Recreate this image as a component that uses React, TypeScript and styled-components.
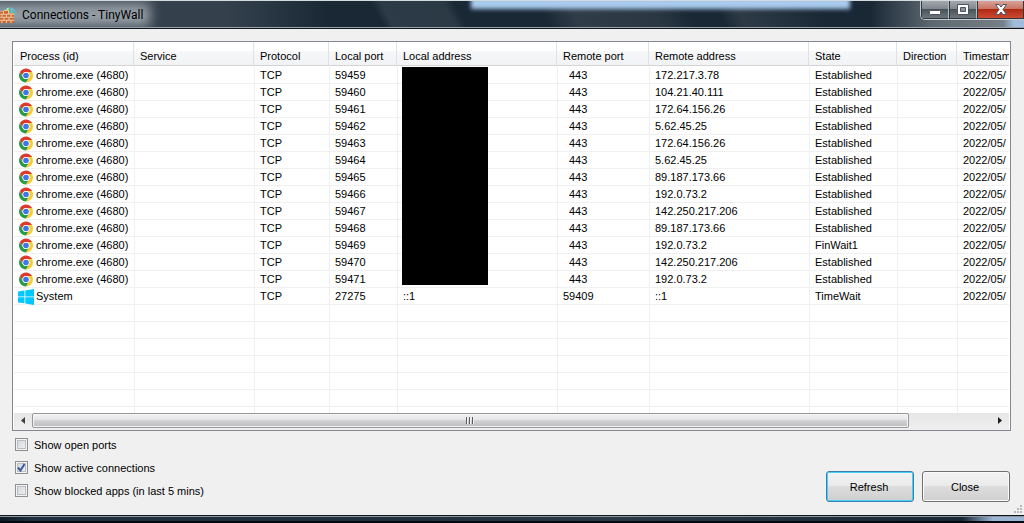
import React from "react";
import styled, { createGlobalStyle } from "styled-components";

const GlobalStyle = createGlobalStyle`
  *, *::before, *::after { box-sizing: border-box; }
  html, body { margin: 0; padding: 0; }
  body, button, input {
    font-family: "Liberation Sans", Arial, sans-serif;
    font-size: 11px;
    line-height: 16px;
    color: #000;
  }
`;

const Window = styled.div`
  display: flex;
  flex-direction: column;
  height: 100vh;
  min-height: 300px;
  overflow: hidden;
  background: #f0f0f0;
`;

const TitleBar = styled.header`
  position: relative;
  flex: none;
  display: flex;
  align-items: center;
  justify-content: space-between;
  height: 29px;
  overflow: hidden;
  border-top: 1px solid #d3dbde;
  border-bottom: 1px solid #10141c;
  box-shadow: inset 0 -1px 0 #9aa3ac;
  background:
    linear-gradient(90deg, transparent 98%, #9fbcdb 99%) 0 17px / 100% 10px no-repeat,
    linear-gradient(90deg, transparent 85%, #5c6870 91%, #737b82 97%, #7e8c99 100%),
    linear-gradient(62deg, transparent 37%, #2d3a47 38%, #2b3945 44%, transparent 45%),
    linear-gradient(62deg, transparent 53%, #303c48 56%, #2a3743 64%, transparent 67%),
    linear-gradient(62deg, transparent 70%, #2d3a46 72%, transparent 80%),
    linear-gradient(90deg, #34414d 22%, transparent 32%),
    #1a2836;
`;

const BackdropGlow = styled.span`
  position: absolute;
  top: -4px;
  left: 46%;
  width: 37%;
  height: 12px;
  background: #a9cbee;
  filter: blur(2px);
`;

const TitleGlow = styled.span`
  position: absolute;
  top: 0;
  bottom: 1px;
  left: -20px;
  width: 170px;
  background: linear-gradient(#757e87, #a0a8af 55%, #858d95);
  filter: blur(6px);
`;

const TitleText = styled.h1`
  position: relative;
  display: flex;
  align-items: center;
  gap: 6px;
  margin: 0;
  font-family: Roboto, "Open Sans", sans-serif;
  font-weight: 400;
  font-size: 12px;
  line-height: 16px;
`;

const CaptionButtons = styled.div`
  position: relative;
  align-self: flex-start;
  display: flex;
  height: 19px;
  border: 1px solid #c4c9cd;
  border-top: 0;
  border-right: 0;
  border-radius: 0 0 0 5px;
  overflow: hidden;
`;

const CaptionButton = styled.button<{ $close?: boolean }>`
  display: flex;
  align-items: center;
  justify-content: center;
  width: ${(p) => (p.$close ? 47 : 28)}px;
  padding: 0;
  border: 1px solid #30373e;
  border-top: 0;
  border-right-color: ${(p) => (p.$close ? "#30373e" : "#b4babf")};
  background: ${(p) =>
    p.$close
      ? "linear-gradient(#d9a298, #c77262 48%, #b02a14 50%, #cc4a30)"
      : "linear-gradient(#a3a8ad, #7f868d 48%, #4a535b 50%, #6d757c)"};
`;

const Client = styled.main`
  flex: 1;
  min-height: 0;
  display: flex;
  flex-direction: column;
  padding: 12px 13px 13px 12px;
`;

const ListView = styled.section`
  flex: 1;
  min-height: 0;
  display: flex;
  flex-direction: column;
  padding: 0 1px;
  border: 1px solid #828790;
  background: #fff;
`;

const Viewport = styled.div`
  flex: 1;
  min-height: 0;
  overflow: hidden;
`;

const Table = styled.table`
  table-layout: fixed;
  width: 1063px;
  border-collapse: separate;
  border-spacing: 0;
`;

const HeadCell = styled.th`
  height: 25px;
  padding: 2px 0 0 6px;
  text-align: left;
  font-weight: 400;
  white-space: nowrap;
  background:
    linear-gradient(#d5d5d5, #d5d5d5) 0 23px / 100% 1px no-repeat,
    linear-gradient(#dfe1e4, #dfe1e4) 100% 0 / 1px 23px no-repeat,
    linear-gradient(#fff 40%, #f7f8fa 41%, #f1f2f4) 0 0 / 100% 23px no-repeat;
`;

const Cell = styled.td<{ $indent?: boolean }>`
  position: relative;
  height: 17px;
  padding: 1px 0 0 ${(p) => (p.$indent ? 12 : 6)}px;
  line-height: 15px;
  white-space: nowrap;
  border-bottom: 1px solid #f0f0f0;
  box-shadow: inset 1px 0 0 #f0f0f0;

  &:first-child {
    padding-left: 4px;
    box-shadow: none;
  }
`;

const Process = styled.span`
  display: flex;
  align-items: center;
  height: 15px;
  gap: 2px;

  svg { flex: none; }
`;

const Redaction = styled.span`
  position: absolute;
  z-index: 1;
  top: 0;
  left: 5px;
  width: 86px;
  height: 218px;
  background: #000;
`;

const ScrollBar = styled.div`
  flex: none;
  display: flex;
  height: 17px;
  background: linear-gradient(#e6e6e6, #efefef);
`;

const ScrollArrow = styled.button`
  display: flex;
  align-items: center;
  justify-content: center;
  width: 18px;
  padding: 0 0 2px;
  border: 0;
  background: transparent;
`;

const ScrollTrack = styled.div`
  flex: 1;
`;

const ScrollThumb = styled.div`
  display: flex;
  align-items: center;
  justify-content: center;
  gap: 1px;
  height: 15px;
  border: 1px solid #979797;
  border-radius: 2px;
  box-shadow: inset 0 0 0 1px #f6f6f6;
  background: linear-gradient(#f3f3f3, #e4e4e6 48%, #d2d2d4 50%, #bdbdc0);
`;

const Grip = styled.i`
  width: 2px;
  height: 7px;
  border-right: 1px solid #f4f4f4;
  background: #55585c;
`;

const Footer = styled.footer`
  flex: none;
  display: flex;
  align-items: flex-end;
  justify-content: space-between;
  padding: 2px 1px 0 3px;
`;

const Options = styled.div`
  display: flex;
  flex-direction: column;
`;

const Option = styled.label`
  display: flex;
  align-items: center;
  gap: 6px;
  height: 23px;
`;

const OptionText = styled.span`
  padding-top: 1px;
`;

const BoxStack = styled.span`
  display: grid;

  > * { grid-area: 1 / 1; }
  svg { pointer-events: none; visibility: hidden; }
  input:checked + svg { visibility: visible; }
`;

const CheckBox = styled.input`
  appearance: none;
  width: 13px;
  height: 13px;
  margin: 0;
  border: 1px solid #8e8f8f;
  box-shadow: inset 0 0 0 1px #f4f4f4, inset 0 0 0 2px #b9bec4;
  background: linear-gradient(135deg, #cfd3d8, #f5f5f6);
`;

const Actions = styled.div`
  display: flex;
  gap: 8px;
`;

const PushButton = styled.button<{ $primary?: boolean }>`
  width: 88px;
  height: 31px;
  padding: 1px 2px 0 0;
  border: 1px solid ${(p) => (p.$primary ? "#3c7fb1" : "#707070")};
  border-radius: 3px;
  box-shadow: ${(p) => (p.$primary ? "inset 0 0 0 1px #46d0f7" : "inset 0 0 0 1px #fafafa")};
  background: linear-gradient(#f2f2f2, #ebebeb 49%, #dddddd 50%, #cfcfcf);
`;

const SizeGrip = styled.svg`
  position: absolute;
  right: 2px;
  bottom: 10px;
`;

const BottomFrame = styled.div`
  flex: none;
  height: 8px;
  border-top: 1px solid #10141c;
  border-bottom: 2px solid #05080c;
  box-shadow: inset 0 1px 0 #8d979f;
  background: linear-gradient(90deg, #101a24, #1f2f3f 3%, #22303e 40%, #2c3a48 60%, #1a2836 94%, #9ab6d4 97%);
`;

const ChromeIcon = () => (
  <svg width="16" height="16" viewBox="0 0 32 32" aria-hidden="true">
    <circle cx="16" cy="15" r="14" fill="#fff" />
    <path d="M3.9 8A14 14 0 0 1 28.1 8L16 8A7 7 0 0 0 9.9 18.5Z" fill="#db3b2f" />
    <path d="M28.1 8A14 14 0 0 1 16 29L22.1 18.5A7 7 0 0 0 16 8Z" fill="#fccb2e" />
    <path d="M16 29A14 14 0 0 1 3.9 8L9.9 18.5A7 7 0 0 0 22.1 18.5Z" fill="#2a9a48" />
    <circle cx="16" cy="15" r="7" fill="#fff" />
    <circle cx="16" cy="15" r="5.6" fill="#3b78e7" />
  </svg>
);

const WindowsIcon = () => (
  <svg width="16" height="16" viewBox="0 0 16 16" aria-hidden="true">
    <path d="M0 2.4L6.5 1.5V7.5H0ZM7.3 1.4L16 0V7.5H7.3ZM0 8.3H6.5V14.3L0 13.4ZM7.3 8.3H16V16L7.3 14.6Z" fill="#00c8ff" />
  </svg>
);

const FirewallIcon = () => (
  <svg width="16" height="16" viewBox="0 0 16 16" aria-hidden="true">
    <circle cx="10" cy="6" r="5.8" fill="#6fb4dd" />
    <path d="M5 4Q8 0 11 .6L9 3L11 4L8 6H5ZM13 3L15 6L13 9Z" fill="#58b947" />
    <path d="M6 2Q8 1 9 1L8 3Z" fill="#dff3d0" />
    <path d="M0 4H4V3H9V6H14V16H0Z" fill="#f0c9a0" />
    <path d="M0 4.6H3V6.8H0ZM4 4H8V6.8H4ZM9 6.6H13.5V7H9ZM0 7.8H1.5V9.8H0ZM2.5 7.8H6V9.8H2.5ZM7 7.8H10.5V9.8H7ZM11.5 7.8H14V9.8H11.5ZM0 10.8H3.5V12.8H0ZM4.5 10.8H8.5V12.8H4.5ZM9.5 10.8H14V12.8H9.5ZM0 13.8H1.5V16H0ZM2.5 13.8H6V16H2.5ZM7 13.8H10.5V16H7ZM11.5 13.8H14V16H11.5Z" fill="#c96a35" />
  </svg>
);

type Connection = {
  process: string;
  system?: boolean;
  localPort: string;
  localAddress?: string;
  remotePort: string;
  remoteAddress: string;
  state: string;
};

const chromeRows: [string, string, string][] = [
  ["59459", "172.217.3.78", "Established"],
  ["59460", "104.21.40.111", "Established"],
  ["59461", "172.64.156.26", "Established"],
  ["59462", "5.62.45.25", "Established"],
  ["59463", "172.64.156.26", "Established"],
  ["59464", "5.62.45.25", "Established"],
  ["59465", "89.187.173.66", "Established"],
  ["59466", "192.0.73.2", "Established"],
  ["59467", "142.250.217.206", "Established"],
  ["59468", "89.187.173.66", "Established"],
  ["59469", "192.0.73.2", "FinWait1"],
  ["59470", "142.250.217.206", "Established"],
  ["59471", "192.0.73.2", "Established"],
];

const connections: Connection[] = [
  ...chromeRows.map(([localPort, remoteAddress, state]) => ({
    process: "chrome.exe (4680)",
    localPort,
    remotePort: "443",
    remoteAddress,
    state,
  })),
  {
    process: "System",
    system: true,
    localPort: "27275",
    localAddress: "::1",
    remotePort: "59409",
    remoteAddress: "::1",
    state: "TimeWait",
  },
];

const columns: [string, number][] = [
  ["Process (id)", 120],
  ["Service", 120],
  ["Protocol", 75],
  ["Local port", 68],
  ["Local address", 160],
  ["Remote port", 92],
  ["Remote address", 160],
  ["State", 88],
  ["Direction", 60],
  ["Timestamp", 120],
];

const BLANK_ROWS = 40;

const options = [
  { label: "Show open ports", checked: false },
  { label: "Show active connections", checked: true },
  { label: "Show blocked apps (in last 5 mins)", checked: false },
];

export default function App() {
  return (
    <>
      <GlobalStyle />
      <Window>
        <TitleBar>
          <BackdropGlow />
          <TitleGlow />
          <TitleText>
            <FirewallIcon />
            Connections - TinyWall
          </TitleText>
          <CaptionButtons>
            <CaptionButton aria-label="Minimize">
              <svg width="12" height="12" viewBox="0 0 12 12">
                <rect x="0.5" y="6.5" width="11" height="4" rx="1" fill="#fff" stroke="#4b5460" />
              </svg>
            </CaptionButton>
            <CaptionButton aria-label="Maximize">
              <svg width="12" height="11" viewBox="0 0 12 11">
                <path d="M.5 .5H11.5V10.5H.5ZM3.5 3.5V7.5H8.5V3.5Z" fill="#fff" fillRule="evenodd" stroke="#4b5460" />
                <rect x="4" y="4" width="4" height="3" fill="#8d949b" />
              </svg>
            </CaptionButton>
            <CaptionButton $close aria-label="Close window">
              <svg width="12" height="11" viewBox="0 0 12 11">
                <path d="M.5 .5H4L6 3L8 .5H11.5L8 5.5L11.5 10.5H8L6 8L4 10.5H.5L4 5.5Z" fill="#fff" stroke="#4b5460" />
              </svg>
            </CaptionButton>
          </CaptionButtons>
        </TitleBar>

        <Client>
          <ListView>
            <Viewport>
              <Table>
                <colgroup>
                  {columns.map(([name, width]) => (
                    <col key={name} style={{ width }} />
                  ))}
                </colgroup>
                <thead>
                  <tr>
                    {columns.map(([name]) => (
                      <HeadCell key={name} scope="col">{name}</HeadCell>
                    ))}
                  </tr>
                </thead>
                <tbody>
                  {connections.map((c, i) => (
                    <tr key={c.localPort}>
                      <Cell>
                        <Process>
                          {c.system ? <WindowsIcon /> : <ChromeIcon />}
                          {c.process}
                        </Process>
                      </Cell>
                      <Cell />
                      <Cell>TCP</Cell>
                      <Cell>{c.localPort}</Cell>
                      <Cell>
                        {i === 0 && <Redaction />}
                        {c.localAddress}
                      </Cell>
                      <Cell $indent={c.remotePort.length < 5}>{c.remotePort}</Cell>
                      <Cell>{c.remoteAddress}</Cell>
                      <Cell>{c.state}</Cell>
                      <Cell />
                      <Cell>2022/05/</Cell>
                    </tr>
                  ))}
                  {Array.from({ length: BLANK_ROWS }, (_, i) => (
                    <tr key={i} aria-hidden="true">
                      {columns.map(([name]) => (
                        <Cell key={name} />
                      ))}
                    </tr>
                  ))}
                </tbody>
              </Table>
            </Viewport>
            <ScrollBar>
              <ScrollArrow aria-label="Scroll left">
                <svg width="4" height="7" viewBox="0 0 4 7"><path d="M4 0V7L0 3.5Z" fill="#3c3f44" /></svg>
              </ScrollArrow>
              <ScrollTrack>
                <ScrollThumb style={{ width: "91.4%" }}>
                  <Grip /><Grip /><Grip />
                </ScrollThumb>
              </ScrollTrack>
              <ScrollArrow aria-label="Scroll right">
                <svg width="4" height="7" viewBox="0 0 4 7"><path d="M0 0V7L4 3.5Z" fill="#1c1e22" /></svg>
              </ScrollArrow>
            </ScrollBar>
          </ListView>

          <Footer>
            <Options>
              {options.map((o) => (
                <Option key={o.label}>
                  <BoxStack>
                    <CheckBox type="checkbox" defaultChecked={o.checked} />
                    <svg width="13" height="13" viewBox="0 0 13 13" aria-hidden="true">
                      <path d="M3 6.5L5.5 9.5L9.5 3" fill="none" stroke="#4158a0" strokeWidth="2" />
                    </svg>
                  </BoxStack>
                  <OptionText>{o.label}</OptionText>
                </Option>
              ))}
            </Options>
            <Actions>
              <PushButton $primary>Refresh</PushButton>
              <PushButton>Close</PushButton>
            </Actions>
          </Footer>
        </Client>

        <SizeGrip width="8" height="8" viewBox="0 0 8 8" fill="#b8b8b8" aria-hidden="true">
          <path d="M6 0H8V2H6ZM3 3H5V5H3ZM6 3H8V5H6ZM0 6H2V8H0ZM3 6H5V8H3ZM6 6H8V8H6Z" />
        </SizeGrip>
        <BottomFrame />
      </Window>
    </>
  );
}
